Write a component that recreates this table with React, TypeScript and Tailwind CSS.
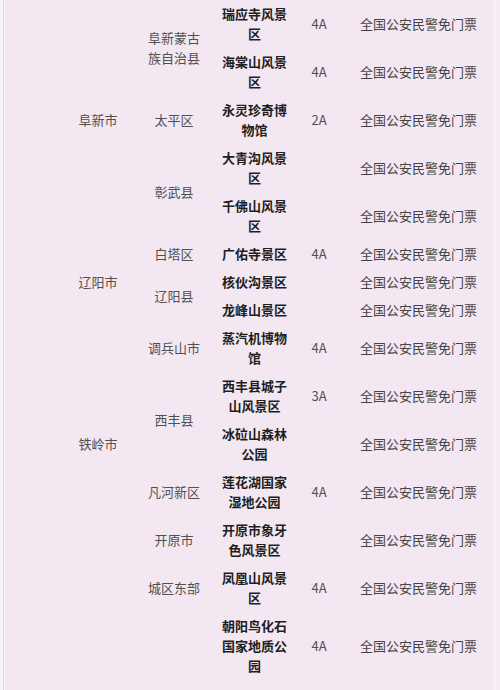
import React from 'react';

interface Row {
  city?: { text: string; span: number };
  district?: { text: string; span: number };
  name: string;
  level: string;
}

const POLICY = '全国公安民警免门票';

const rows: Row[] = [
  { city: { text: '阜新市', span: 5 }, district: { text: '阜新蒙古族自治县', span: 2 }, name: '瑞应寺风景区', level: '4A' },
  { name: '海棠山风景区', level: '4A' },
  { district: { text: '太平区', span: 1 }, name: '永灵珍奇博物馆', level: '2A' },
  { district: { text: '彰武县', span: 2 }, name: '大青沟风景区', level: '' },
  { name: '千佛山风景区', level: '' },
  { city: { text: '辽阳市', span: 3 }, district: { text: '白塔区', span: 1 }, name: '广佑寺景区', level: '4A' },
  { district: { text: '辽阳县', span: 2 }, name: '核伙沟景区', level: '' },
  { name: '龙峰山景区', level: '' },
  { city: { text: '铁岭市', span: 5 }, district: { text: '调兵山市', span: 1 }, name: '蒸汽机博物馆', level: '4A' },
  { district: { text: '西丰县', span: 2 }, name: '西丰县城子山风景区', level: '3A' },
  { name: '冰砬山森林公园', level: '' },
  { district: { text: '凡河新区', span: 1 }, name: '莲花湖国家湿地公园', level: '4A' },
  { district: { text: '开原市', span: 1 }, name: '开原市象牙色风景区', level: '' },
  { city: { text: '', span: 2 }, district: { text: '城区东部', span: 1 }, name: '凤凰山风景区', level: '4A' },
  { district: { text: '', span: 1 }, name: '朝阳鸟化石国家地质公园', level: '4A' },
];

export default function App() {
  return (
    <div className="w-[500px] h-[690px] overflow-hidden bg-[#f8f4f8] flex font-['Noto_Sans_CJK_SC','Liberation_Sans',sans-serif]">
      <div className="w-[3px] shrink-0" />
      <div className="w-px shrink-0 bg-[#dcdde6]" />
      <div className="w-px shrink-0" />
      <div className="w-[489px] shrink-0 bg-[#f3e8f2]">
        <table className="w-full table-fixed border-collapse text-[13px] leading-[20px] text-[#3a3a3a]">
          <colgroup>
            <col className="w-[57px]" />
            <col className="w-[72px]" />
            <col className="w-[80px]" />
            <col className="w-[81px]" />
            <col className="w-[48px]" />
            <col className="w-[151px]" />
          </colgroup>
          <tbody>
            {rows.map((r, i) => (
              <tr key={i}>
                {r.city && (
                  <>
                    <td rowSpan={r.city.span} />
                    <td rowSpan={r.city.span} className="py-1 text-center align-middle text-[#505050]">
                      {r.city.text}
                    </td>
                  </>
                )}
                {r.district && (
                  <td rowSpan={r.district.span} className="px-3 py-1 text-center align-middle text-[#505050]">
                    {r.district.text}
                  </td>
                )}
                <td className="px-2 py-1 text-center align-middle font-bold text-[#1e1e1e]">{r.name}</td>
                <td className="py-1 text-center align-middle text-[#505050]">{r.level}</td>
                <td className="py-1 text-center align-middle text-[#444]">{POLICY}</td>
              </tr>
            ))}
          </tbody>
        </table>
      </div>
      <div className="w-px shrink-0 bg-[#fbf7fb]" />
      <div className="flex-1 bg-[#f4eaf3]" />
    </div>
  );
}
